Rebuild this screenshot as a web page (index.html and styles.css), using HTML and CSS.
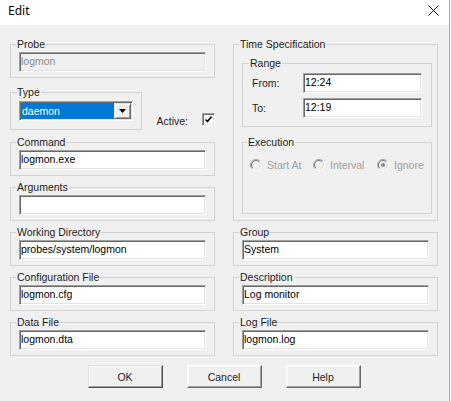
FILE: index.html
```html
<!DOCTYPE html>
<html>
<head>
<meta charset="utf-8">
<link rel="stylesheet" href="styles.css">
</head>
<body>
<div class="window">
  <div class="titlebar">
    <span class="title">Edit</span>
    <svg class="close" width="11" height="11" viewBox="0 0 11 11"><path d="M0.5 0.5 L10.5 10.5 M10.5 0.5 L0.5 10.5" stroke="#1a1a1a" stroke-width="1" fill="none"/></svg>
  </div>
  <div class="content">
    <div class="columns">
      <div class="col">
        <fieldset class="grp">
          <legend>Probe</legend>
          <div class="field disabled">logmon</div>
        </fieldset>
        <div class="type-row">
          <fieldset class="grp type">
            <legend>Type</legend>
            <div class="combo">
              <span class="sel">daemon</span>
              <span class="arrow"><svg width="7" height="4" viewBox="0 0 7 4"><path d="M0 0 H7 L3.5 4 Z" fill="#000"/></svg></span>
            </div>
          </fieldset>
          <div class="active">
            <span class="active-label">Active:</span>
            <span class="check"><svg width="9" height="9" viewBox="0 0 9 9"><path d="M1.5 4.5 L3.5 6.5 L7.5 1.5" stroke="#000" stroke-width="1.6" fill="none"/></svg></span>
          </div>
        </div>
        <fieldset class="grp">
          <legend>Command</legend>
          <div class="field">logmon.exe</div>
        </fieldset>
        <fieldset class="grp">
          <legend>Arguments</legend>
          <div class="field"></div>
        </fieldset>
        <fieldset class="grp">
          <legend>Working Directory</legend>
          <div class="field">probes/system/logmon</div>
        </fieldset>
        <fieldset class="grp">
          <legend>Configuration File</legend>
          <div class="field">logmon.cfg</div>
        </fieldset>
        <fieldset class="grp">
          <legend>Data File</legend>
          <div class="field">logmon.dta</div>
        </fieldset>
      </div>
      <div class="col">
        <fieldset class="grp time">
          <legend>Time Specification</legend>
          <fieldset class="grp range">
            <legend>Range</legend>
            <div class="trow"><span class="tlabel">From:</span><div class="field tfield">12:24</div></div>
            <div class="trow"><span class="tlabel">To:</span><div class="field tfield">12:19</div></div>
          </fieldset>
          <fieldset class="grp exec">
            <legend>Execution</legend>
            <div class="radios">
              <span class="radio">
                <svg width="12" height="12" viewBox="0 0 12 12"><circle cx="6" cy="6" r="5" fill="#f0f0f0"/><path d="M9.9 2.1 A5.5 5.5 0 0 0 2.1 9.9" stroke="#a0a0a0" fill="none"/><path d="M9.2 2.8 A4.5 4.5 0 0 0 2.8 9.2" stroke="#7a7a7a" fill="none"/><path d="M9.9 2.1 A5.5 5.5 0 0 1 2.1 9.9" stroke="#ffffff" fill="none"/><path d="M9.2 2.8 A4.5 4.5 0 0 1 2.8 9.2" stroke="#e3e3e3" fill="none"/></svg>
                <span>Start At</span>
              </span>
              <span class="radio">
                <svg width="12" height="12" viewBox="0 0 12 12"><circle cx="6" cy="6" r="5" fill="#f0f0f0"/><path d="M9.9 2.1 A5.5 5.5 0 0 0 2.1 9.9" stroke="#a0a0a0" fill="none"/><path d="M9.2 2.8 A4.5 4.5 0 0 0 2.8 9.2" stroke="#7a7a7a" fill="none"/><path d="M9.9 2.1 A5.5 5.5 0 0 1 2.1 9.9" stroke="#ffffff" fill="none"/><path d="M9.2 2.8 A4.5 4.5 0 0 1 2.8 9.2" stroke="#e3e3e3" fill="none"/></svg>
                <span>Interval</span>
              </span>
              <span class="radio">
                <svg width="12" height="12" viewBox="0 0 12 12"><circle cx="6" cy="6" r="5" fill="#f0f0f0"/><path d="M9.9 2.1 A5.5 5.5 0 0 0 2.1 9.9" stroke="#a0a0a0" fill="none"/><path d="M9.2 2.8 A4.5 4.5 0 0 0 2.8 9.2" stroke="#7a7a7a" fill="none"/><path d="M9.9 2.1 A5.5 5.5 0 0 1 2.1 9.9" stroke="#ffffff" fill="none"/><path d="M9.2 2.8 A4.5 4.5 0 0 1 2.8 9.2" stroke="#e3e3e3" fill="none"/><circle cx="6" cy="6" r="2" fill="#8a8a8a"/></svg>
                <span>Ignore</span>
              </span>
            </div>
          </fieldset>
        </fieldset>
        <fieldset class="grp">
          <legend>Group</legend>
          <div class="field">System</div>
        </fieldset>
        <fieldset class="grp">
          <legend>Description</legend>
          <div class="field">Log monitor</div>
        </fieldset>
        <fieldset class="grp">
          <legend>Log File</legend>
          <div class="field">logmon.log</div>
        </fieldset>
      </div>
    </div>
    <div class="buttons">
      <button class="btn default">OK</button>
      <button class="btn">Cancel</button>
      <button class="btn">Help</button>
    </div>
  </div>
</div>
</body>
</html>
```
FILE: styles.css
```css
html, body {
  margin: 0;
  padding: 0;
  background: #ffffff;
}

.window {
  width: 450px;
  height: 401px;
  box-sizing: border-box;
  border-right: 1px solid #a8a8a8;
  background: #f0f0f0;
  font-family: "Liberation Sans", Arial, sans-serif;
  font-size: 10.5px;
  color: #1e1e1e;
  overflow: hidden;
}

.titlebar {
  height: 25px;
  box-sizing: border-box;
  background: #ffffff;
  display: flex;
  align-items: center;
  justify-content: space-between;
  padding: 0 10px 4px 8px;
}

.title {
  font-family: "Noto Sans", "Liberation Sans", sans-serif;
  font-size: 12px;
  color: #000;
}

.close {
  display: block;
}

.content {
  padding-top: 12px;
}

.columns {
  display: flex;
  gap: 18px;
  padding-left: 10px;
}

.col {
  width: 205px;
  display: flex;
  flex-direction: column;
  gap: 4px;
}

fieldset.grp {
  margin: 0;
  padding: 0 8px 5px 8px;
  border: 1px solid #d3d3d3;
  min-width: 0;
}

fieldset.grp > legend {
  padding: 0 1px;
  margin-left: -3px;
  line-height: 15px;
  font-size: 10.5px;
}

.field {
  height: 20px;
  box-sizing: border-box;
  background: #ffffff;
  border: 1px solid;
  border-color: #a0a0a0 #ffffff #ffffff #a0a0a0;
  box-shadow: inset 1px 1px 0 #696969, inset -1px -1px 0 #e3e3e3;
  padding: 0 0 0 1px;
  line-height: 16px;
  white-space: nowrap;
  overflow: hidden;
  color: #000;
}

.field.disabled {
  background: #f0f0f0;
  color: #8d8d8d;
}

.type-row {
  display: flex;
  align-items: flex-end;
  margin-top: 3px;
  margin-bottom: 1px;
}

fieldset.grp.type {
  width: 134px;
  box-sizing: border-box;
  padding-bottom: 8px;
}

.combo {
  margin-top: 1px;
  height: 20px;
  box-sizing: border-box;
  display: flex;
  background: #ffffff;
  border: 1px solid;
  border-color: #a0a0a0 #ffffff #ffffff #a0a0a0;
  box-shadow: inset 1px 1px 0 #696969, inset -1px -1px 0 #e3e3e3;
  padding: 1px;
}

.sel {
  flex: 1;
  background: #0078d7;
  color: #ffffff;
  line-height: 16px;
  padding-left: 1px;
}

.arrow {
  width: 17px;
  box-sizing: border-box;
  background: #f0f0f0;
  border: 1px solid;
  border-color: #e3e3e3 #696969 #696969 #e3e3e3;
  box-shadow: inset 1px 1px 0 #ffffff, inset -1px -1px 0 #a0a0a0;
  display: flex;
  align-items: center;
  justify-content: center;
}

.active {
  display: flex;
  align-items: flex-end;
  margin-left: 14px;
  padding-bottom: 4px;
}

.active-label {
  line-height: 12px;
  margin-bottom: -1px;
}

.check {
  margin-left: 14px;
  width: 13px;
  height: 13px;
  box-sizing: border-box;
  background: #ffffff;
  border: 1px solid;
  border-color: #a0a0a0 #ffffff #ffffff #a0a0a0;
  box-shadow: inset 1px 1px 0 #696969, inset -1px -1px 0 #e3e3e3;
  display: flex;
  align-items: center;
  justify-content: center;
}

.check svg {
  display: block;
}

fieldset.grp.time {
  padding: 4px 5px 6px 8px;
}

fieldset.grp.range {
  padding: 2px 9px 8px 9px;
  display: flex;
  flex-direction: column;
  gap: 5px;
}

.trow {
  display: flex;
  align-items: center;
}

.tlabel {
  width: 51px;
}

.tfield {
  width: 119px;
}

fieldset.grp.exec {
  margin-top: 8px;
  padding: 9px 7px 42px 7px;
}

.radios {
  display: grid;
  grid-template-columns: 63px 64px 1fr;
  color: #a0a0a0;
}

.radio {
  display: flex;
  align-items: center;
  gap: 5px;
  height: 12px;
}

.radio svg {
  display: block;
  flex: none;
}

.buttons {
  display: flex;
  justify-content: center;
  gap: 24px;
  margin-top: 9px;
  padding-right: 1px;
}

.btn {
  width: 75px;
  height: 23px;
  box-sizing: border-box;
  margin: 0;
  padding: 0;
  font-family: "Liberation Sans", Arial, sans-serif;
  font-size: 10.5px;
  color: #1e1e1e;
  background: #f0f0f0;
  border: 1px solid;
  border-color: #ffffff #696969 #696969 #ffffff;
  box-shadow: inset -1px -1px 0 #a0a0a0, inset 1px 1px 0 #f8f8f8;
}

.btn.default {
  border-color: #e3e3e3 #4a4a4a #4a4a4a #e3e3e3;
}
```
